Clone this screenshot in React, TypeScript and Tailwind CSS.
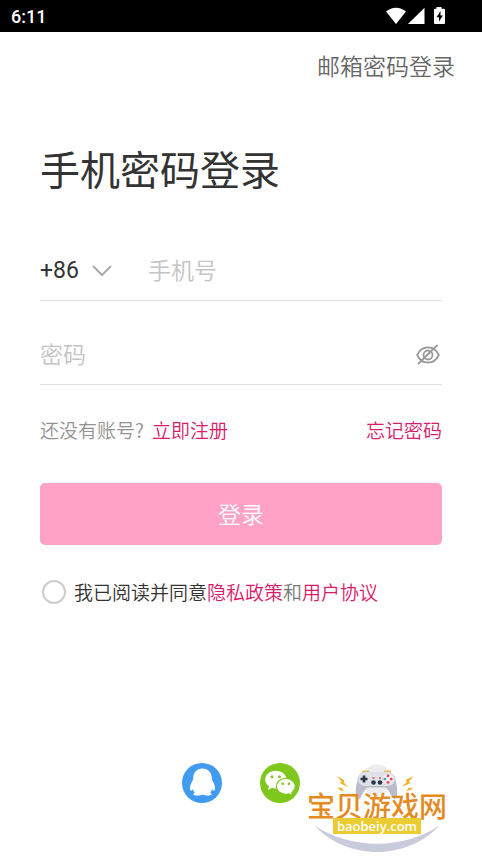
import React, { useState } from 'react';

const StatusBar: React.FC = () => (
  <div className="flex h-8 items-center justify-between bg-black pr-9 pl-[11px] text-white">
    <span className="pt-0.5 font-[Roboto,sans-serif] text-lg font-medium">6:11</span>
    <svg width="60" height="20" viewBox="0 0 60 20" fill="currentColor" aria-hidden="true">
      <path d="M0 5.600C5.500.5 14.500.5 20 5.600L10 18Z" />
      <path d="M38.500 1.800V18H22Z" />
      <path d="M50.500 1h5v1.800H58a1 1 0 0 1 1 1V17a1 1 0 0 1-1 1h-9a1 1 0 0 1-1-1V3.800a1 1 0 0 1 1-1h1.500Z" />
      <path d="m54.500 5-4 6.300h2.500V15.500l4-6h-2.500Z" fill="#000" />
    </svg>
  </div>
);

const ChevronIcon: React.FC = () => (
  <svg width="20" height="12" viewBox="0 0 20 12" fill="none" stroke="#aaa" strokeWidth="2" aria-hidden="true">
    <path d="m1 1 9 9 9-9" />
  </svg>
);

const EyeOffIcon: React.FC = () => (
  <svg width="24" height="22" viewBox="0 0 24 22" fill="none" stroke="#999" strokeWidth="1.800" aria-hidden="true">
    <path d="M1.200 11C3.500 6 7.500 3.400 12 3.400S20.500 6 22.800 11C20.500 16 16.500 18.600 12 18.600S3.500 16 1.200 11Z" />
    <circle cx="12" cy="11" r="4.500" />
    <path d="M2 20 21.500 1" />
  </svg>
);

const QQIcon: React.FC = () => (
  <svg width="40" height="40" viewBox="0 0 40 40" aria-hidden="true">
    <circle cx="20" cy="20" r="20" fill="#419bf0" />
    <path
      fill="#fff"
      d="M20.500 5.500C15 5.500 11.300 9.500 11.200 15c0 1.300-.3 2-1 3.200C8.600 20.800 7.800 23.500 8 26c.1 1.500.9 2 1.600 1.600.6-.3 1-.8 1.400-1.300.3 1.300.9 2.400 1.700 3.400-1 .5-1.400 1.200-1.200 1.900.5 1.400 5.700 1.500 7.600.2h2.800c1.900 1.300 7.100 1.200 7.600-.2.2-.7-.2-1.400-1.200-1.900.8-1 1.400-2.100 1.700-3.400.4.500.8 1 1.400 1.300.7.400 1.500-.1 1.600-1.600.2-2.500-.6-5.200-2.200-7.800-.7-1.200-1-1.900-1-3.200-.1-5.500-3.800-9.500-9.300-9.500Z"
    />
  </svg>
);

const WechatIcon: React.FC = () => (
  <svg width="40" height="40" viewBox="0 0 40 40" aria-hidden="true">
    <circle cx="20" cy="20" r="20" fill="#7fc71c" />
    <path
      fill="#fff"
      d="M15.800 7.800C9.900 7.800 5.200 11.700 5.200 16.600c0 2.700 1.500 5.100 3.800 6.800L7.900 27l4.200-2.200c1.200.4 2.400.6 3.700.6 5.900 0 10.600-3.900 10.600-8.800S21.700 7.800 15.800 7.800Z"
    />
    <path
      fill="#fff"
      stroke="#7fc71c"
      strokeWidth="1.200"
      d="M25.800 15.500c-5.300 0-9.500 3.500-9.500 7.900s4.200 7.900 9.500 7.900c1.100 0 2.200-.2 3.200-.5l3.700 2-.9-3.400c2.100-1.500 3.500-3.600 3.500-6 0-4.400-4.200-7.900-9.500-7.900Z"
    />
    <g fill="#7fc71c">
      <circle cx="12" cy="13.800" r="1.500" />
      <circle cx="19.500" cy="13.800" r="1.500" />
      <circle cx="22.700" cy="20.800" r="1.300" />
      <circle cx="29" cy="20.800" r="1.300" />
    </g>
  </svg>
);

const GamepadIcon: React.FC = () => (
  <svg width="88" height="36" viewBox="0 0 88 36" aria-hidden="true">
    <circle cx="44" cy="16" r="15.500" fill="#ececee" />
    <path d="M29 9.500V7.500q0-1 1-1h5q1 0 1 1v2M51 9.500V7.500q0-1 1-1h5q1 0 1 1v2" fill="#e9b740" />
    <path
      fill="#b9bccb"
      d="M31 8c2.500-.5 5-.3 7 .8h11c2-1.100 4.500-1.300 7-.8 4 1 5.800 4 6.700 8.500C64 22 65 29 63.500 33.500c-.8 2.200-3.200 1.800-4.500-.5-1.500-3-3.500-7-6.500-9.500h-18c-3 2.500-5 6.500-6.500 9.500-1.300 2.300-3.700 2.700-4.500.5C22 29 23 22 24.300 16.500 25.200 12 27 9 31 8Z"
    />
    <path
      fill="#dfe1e9"
      d="M31 8c2.500-.5 5-.3 7 .8h11c2-1.100 4.500-1.300 7-.8 4 1 5.800 4 5.800 7.500 0 4.500-4 7-8.800 6.500H34c-4.800.5-8.800-2-8.800-6.500C25.200 12 27 9 31 8Z"
    />
    <path d="M29.700 11.500h2.600v2.200h2.200v2.600h-2.200v2.200h-2.600v-2.200h-2.200v-2.600h2.200Z" fill="#29384b" />
    <g fill="#29384b">
      <circle cx="40.500" cy="18.500" r="2.300" />
      <circle cx="47" cy="18.500" r="2.300" />
    </g>
    <path d="M39.500 14h2M46 14h2" stroke="#d2485a" strokeWidth="1.300" />
    <circle cx="55" cy="15" r="5" fill="#f7f8fb" />
    <g fill="#e24d54">
      <circle cx="55" cy="11.800" r="1.500" />
      <circle cx="55" cy="18.200" r="1.500" />
      <circle cx="58.200" cy="15" r="1.500" />
    </g>
    <circle cx="51.800" cy="15" r="1.500" fill="#51a6bc" />
    <path
      fill="#f0b02b"
      d="m4 12 7.500 4.500-1 1.500 4.500 5.500-8-4.500 1.500-1.500ZM4 23.500l5.500.5v1.500l2 2-6-2 1-.5ZM80.500 12l-8 4 1.500 1.800-5 5.200 8.500-4-1.500-1.500ZM80.500 23.500l-5.500.5v1.500l-2.500 2 6.500-2-1-.5Z"
    />
  </svg>
);

const SiteBadge: React.FC = () => (
  <div className="absolute right-[35px] bottom-[5px] flex flex-col items-center">
    <GamepadIcon />
    <span className="-mt-2 text-[28px] leading-[26px] font-medium whitespace-nowrap text-[#e58a20]">宝贝游戏网</span>
    <span className="z-10 bg-[#ebcc32] px-1 font-['Open_Sans',sans-serif] text-[13px] leading-4 font-semibold text-white">
      baobeiy.com
    </span>
    <svg className="-mt-[9px]" width="128" height="27" viewBox="0 0 128 27" fill="#c9cbdc" aria-hidden="true">
      <path d="M1 0C37 25 91 25 127 0 94 36 34 36 1 0Z" />
    </svg>
  </div>
);

export default function App() {
  const [phone, setPhone] = useState('');
  const [password, setPassword] = useState('');
  const [visible, setVisible] = useState(false);
  const [agreed, setAgreed] = useState(false);

  return (
    <div className="relative flex min-h-screen flex-col bg-white font-['Noto_Sans_CJK_SC',sans-serif] font-[350] text-[#333]">
      <StatusBar />
      <nav className="flex justify-end pt-[15px] pr-[27px]">
        <a href="#email" className="text-[23px] leading-9 text-[#666]">邮箱密码登录</a>
      </nav>

      <form className="flex flex-col px-10" onSubmit={(e) => e.preventDefault()}>
        <h1 className="mt-[57px] text-[40px] leading-14 font-normal">手机密码登录</h1>

        <div className="mt-[45px] flex h-15 items-center border-b border-[#e2e2e2]">
          <button type="button" className="flex w-[108px] shrink-0 items-center gap-[13px] text-[23px] leading-9">
            <span className="font-[Roboto,sans-serif] font-normal">+86</span>
            <ChevronIcon />
          </button>
          <input
            type="tel"
            aria-label="手机号"
            placeholder="手机号"
            value={phone}
            onChange={(e) => setPhone(e.target.value)}
            className="h-9 min-w-0 flex-1 pb-1 text-[23px] outline-none placeholder:text-[#c4c4c4]"
          />
        </div>

        <div className="mt-6 flex h-15 items-center border-b border-[#e2e2e2]">
          <input
            type={visible ? 'text' : 'password'}
            aria-label="密码"
            placeholder="密码"
            value={password}
            onChange={(e) => setPassword(e.target.value)}
            className="h-9 min-w-0 flex-1 pb-1 text-[23px] outline-none placeholder:text-[#c4c4c4]"
          />
          <button type="button" aria-label="显示密码" onClick={() => setVisible(!visible)} className="pr-0.5">
            <EyeOffIcon />
          </button>
        </div>

        <div className="mt-[31px] flex justify-between text-[19px] leading-7">
          <p className="text-[#929292]">
            还没有账号?<a href="#register" className="ml-2 text-[#d81b6a]">立即注册</a>
          </p>
          <a href="#forgot" className="text-[#d81b6a]">忘记密码</a>
        </div>

        <button type="submit" className="mt-[39px] h-[62px] rounded-[5px] bg-[#ffa2c5] pb-0.5 text-[23px] text-white">
          登录
        </button>

        <div className="mt-[33px] ml-0.5 flex items-center gap-2 text-[19px] leading-7">
          <input
            id="agree"
            type="checkbox"
            checked={agreed}
            onChange={(e) => setAgreed(e.target.checked)}
            className="size-6 shrink-0 appearance-none rounded-full border-2 border-[#ccc] checked:bg-[#d81b6a]"
          />
          <p className="text-[#777]">
            <label htmlFor="agree" className="text-[#333]">我已阅读并同意</label>
            <a href="#privacy" className="text-[#d81b6a]">隐私政策</a>和
            <a href="#terms" className="text-[#d81b6a]">用户协议</a>
          </p>
        </div>
      </form>

      <div className="mt-auto flex justify-center gap-[38px] pt-10 pb-[54px]">
        <button type="button" aria-label="QQ登录">
          <QQIcon />
        </button>
        <button type="button" aria-label="微信登录">
          <WechatIcon />
        </button>
      </div>
      <SiteBadge />
    </div>
  );
}
